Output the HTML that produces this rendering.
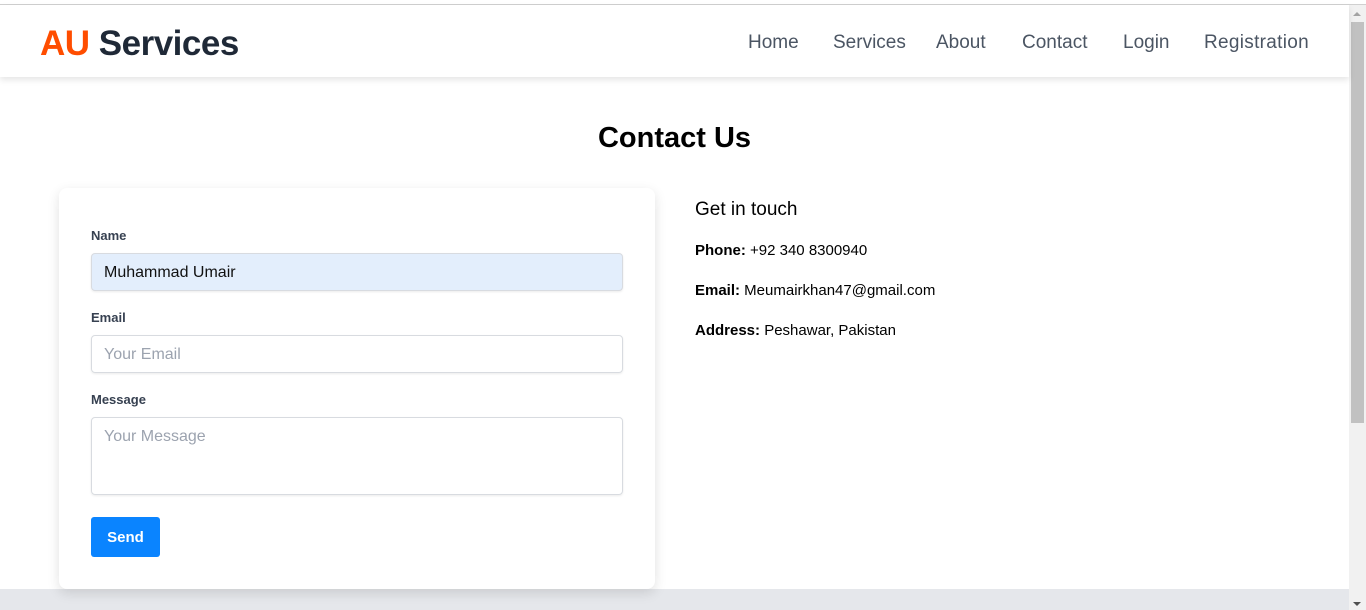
<!DOCTYPE html>
<html><head><meta charset="utf-8"><style>
*{box-sizing:border-box;margin:0;padding:0}
body{width:1366px;height:610px;overflow:hidden;background:#fff;font-family:"Liberation Sans",sans-serif;position:relative}
.topline{position:absolute;top:0;left:0;width:1366px;height:5px;background:#fff;border-bottom:1px solid #d0d0d0}
.sb{position:absolute;right:0;top:5px;width:17px;height:605px;background:#f1f1f1}
.thumb{position:absolute;right:2px;top:17px;width:13px;height:401px;background:#c1c1c1}
.arr{position:absolute;left:4px;width:0;height:0;border-left:4px solid transparent;border-right:4px solid transparent}
header{position:absolute;top:5px;left:0;width:1349px;height:72px;background:#fff;box-shadow:0 3px 6px rgba(0,0,0,.1);z-index:2}
.logo{position:absolute;left:40px;top:19px;font-size:35px;font-weight:bold;color:#1f2937;letter-spacing:-0.5px}
.logo span{color:#ff4d00}
nav a{position:absolute;top:27px;font-size:19px;color:#4b5563;white-space:nowrap}
.foot{position:absolute;left:0;top:589px;width:1349px;height:21px;background:#e5e7eb}
h1{position:absolute;top:122px;left:0;width:1349px;text-align:center;font-size:29px;font-weight:bold;color:#000}
.card{position:absolute;left:59px;top:188px;width:596px;height:401px;background:#fff;border-radius:8px;box-shadow:0 4px 12px rgba(0,0,0,.12);z-index:1}
.lbl{position:absolute;left:32px;font-size:13px;font-weight:bold;color:#374151}
.in{position:absolute;left:32px;width:532px;height:38px;border:1px solid #d8dbe0;border-radius:4px;box-shadow:0 1px 2px rgba(0,0,0,.08);font-size:16px;padding:10px 12px 0;color:#9ca3af}
.btn{position:absolute;left:32px;top:329px;width:69px;height:40px;background:#0a84ff;border-radius:3px;color:#fff;font-weight:bold;font-size:15px;text-align:center;line-height:42px}
.info{position:absolute;left:695px;color:#000;font-size:15px}
</style></head><body>
<div class="topline"></div>
<header><div class="logo"><span>AU</span> Services</div>
<nav><a style="left:748px">Home</a><a style="left:833px">Services</a><a style="left:936px">About</a><a style="left:1022px">Contact</a><a style="left:1123px">Login</a><a style="left:1204px;letter-spacing:0.3px">Registration</a></nav></header>
<h1>Contact Us</h1>
<div class="card">
<div class="lbl" style="top:40px">Name</div>
<div class="in" style="top:65px;background:#e3eefc;color:#111">Muhammad Umair</div>
<div class="lbl" style="top:122px">Email</div>
<div class="in" style="top:147px">Your Email</div>
<div class="lbl" style="top:204px">Message</div>
<div class="in" style="top:229px;height:78px">Your Message</div>
<div class="btn">Send</div>
</div>
<div class="info" style="top:199px;font-size:19px">Get in touch</div>
<div class="info" style="top:242px"><b>Phone:</b> +92 340 8300940</div>
<div class="info" style="top:282px"><b>Email:</b> Meumairkhan47@gmail.com</div>
<div class="info" style="top:322px"><b>Address:</b> Peshawar, Pakistan</div>
<div class="foot"></div>
<div class="sb"><div class="arr" style="top:7px;border-bottom:4px solid #a3a3a3"></div><div class="thumb"></div><div class="arr" style="bottom:4px;border-top:4px solid #505050"></div></div>
</body></html>
